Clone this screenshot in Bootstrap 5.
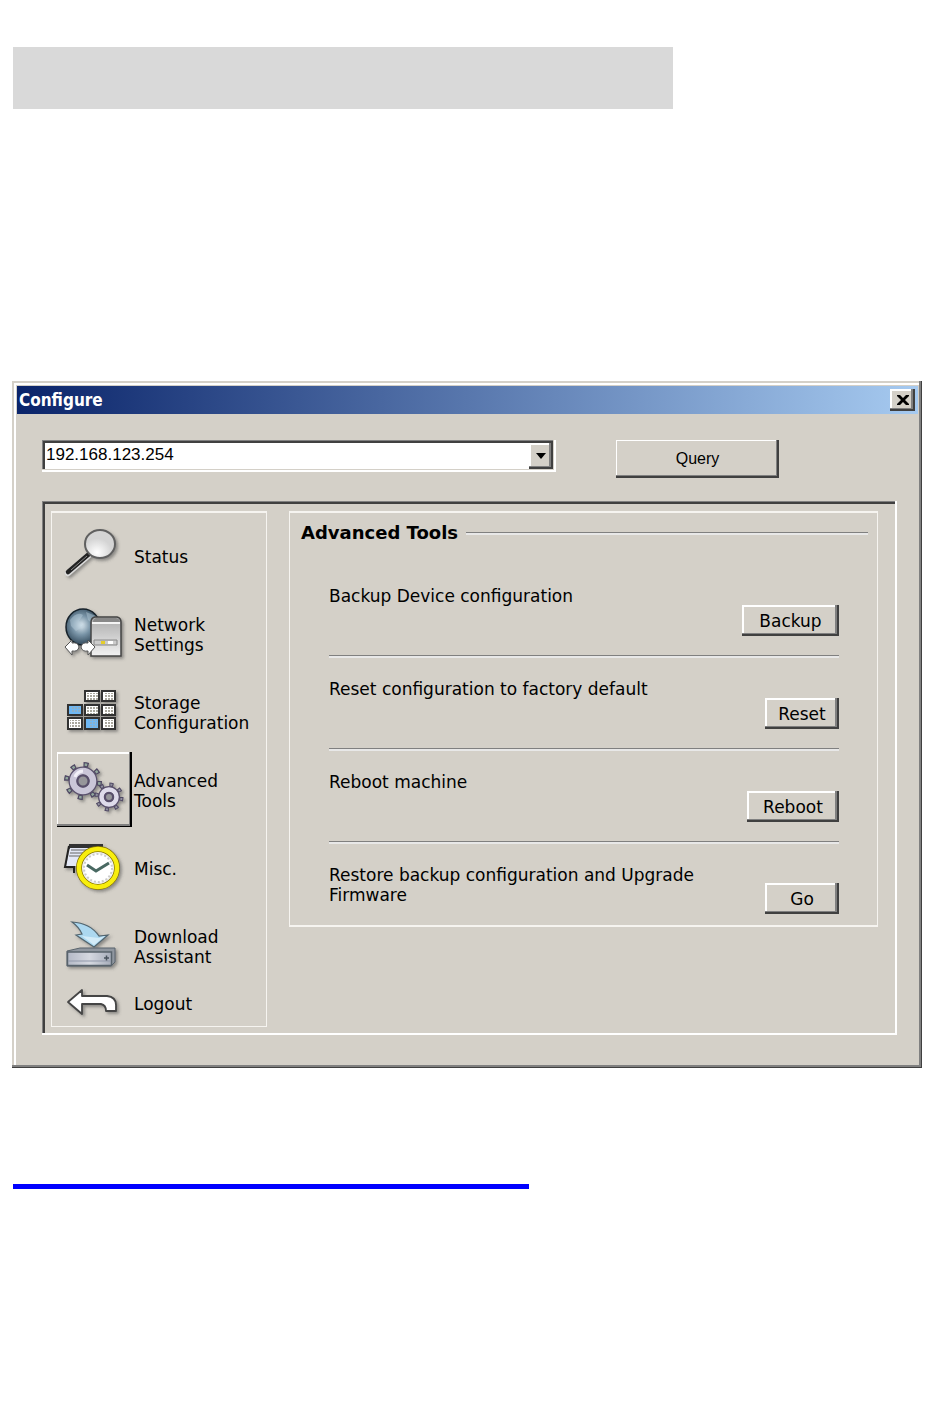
<!DOCTYPE html>
<html lang="en">
<head>
<meta charset="utf-8">
<meta name="viewport" content="width=device-width, initial-scale=1">
<title>Configure</title>
<link rel="stylesheet" href="https://cdn.jsdelivr.net/npm/bootstrap@5.3.0/dist/css/bootstrap.min.css">
<style>
  :root { --face: #d4d0c8; --shade: #808080; --edge: #404040; }
  body { font: 17px/20px "DejaVu Sans", sans-serif; color: #000; background: #fff; }
  .sheet { padding: 47px 28px 47px 12px; }
  .banner-block { width: 72.5%; height: 62px; margin-left: 1px; background: #d9d9d9; }
  .blue-rule { width: 56.7%; height: 5px; margin: 116px 0 0 1px; background: #00f; border: 0; opacity: 1; }
  .dialog-win {
    margin-top: 272px; padding: 5px 4px 3px 5px; background: var(--face);
    box-shadow: inset -1px -1px var(--edge), inset -3px -3px var(--shade), inset 2px 2px var(--face), inset 4px 4px #fff;
  }
  .title-strip {
    height: 28px; padding: 0 3px 0 2px; color: #fff;
    background: linear-gradient(90deg, #0a246a, #a6caf0);
    font: bold 17px/28px "DejaVu Sans Condensed", "DejaVu Sans", sans-serif;
  }
  .title-strip h1 { font: inherit; margin: 0; }
  .raised {
    background: var(--face); color: #000; border: 0; border-radius: 0; padding: 0;
    box-shadow: inset -2px -2px var(--edge), inset -4px -3px var(--shade), inset 2px 2px #fff;
  }
  .close-btn { width: 25px; height: 22px; }
  .dialog-body { padding: 26px 21px 30px 25px; }
  .query-row { column-gap: 60px; }
  .well-cols { column-gap: 22px; }
  .arial { font-family: "Liberation Sans", sans-serif; }
  .combo { flex: 0 1 514px; height: 32px; padding: 3px; background: #fff;
    box-shadow: inset -2px -2px #fff, inset -3px -3px var(--face), inset 1px 1px var(--shade), inset 3px 3px var(--edge); }
  .combo select { appearance: none; border: 0; border-radius: 0; background: transparent; width: 100%; height: 23px; padding: 0 26px 0 1px; color: #000; line-height: 22px; }
  .combo-arrow { right: 3px; top: 3px; width: 24px; height: 26px; pointer-events: none; }
  .query-btn { flex: 0 0 163px; height: 38px; font-size: 16px;
    box-shadow: inset -2px -2px var(--edge), inset -3px -3px var(--shade), inset 1px 1px #fff; }
  .well { margin-top: 23px; padding: 10px 19px 8px 9px;
    box-shadow: inset -2px -2px #fff, inset 1px 1px var(--shade), inset 3px 3px var(--edge); }
  .etched { border: 1px solid #f6f4f0; border-top-width: 2px; }
  .side-menu { flex: 0 0 216px; padding: 5px 5px 4px; }
  .side-menu a { color: #000; text-decoration: none; height: 78px; column-gap: 2px; }
  .side-menu a.short { height: 36px; }
  .side-menu svg { flex: none; width: 75px; height: 100%; }
  .side-menu .active svg { height: 75px; margin-bottom: 3px; background: var(--face);
    box-shadow: inset -2px -1px #000, inset -3px -3px var(--shade), inset 1px 2px #fff; }
  .tools { padding: 10px 9px 11px 11px; border-bottom-width: 2px; }
  .tools h2 { font: bold 18px/20px "DejaVu Sans", sans-serif; margin: 0; }
  .groove { height: 3px; border-top: 1px solid var(--shade); background: #e8e8e8; }
  .task-list { padding: 22px 29px 0 28px; }
  .task { min-height: 93px; padding: 21px 0 20px; border-bottom: 2px solid #e8e8e8; box-shadow: inset 0 -1px var(--shade); }
  .task:last-child { min-height: 0; padding-bottom: 0; border: 0; box-shadow: none; }
  .task p { margin: 0; min-height: 49px; }
  .task button { flex: none; height: 31px; width: 74px; }
  .task .wide { width: 97px; }
  .task .mid { width: 92px; }
</style>
</head>
<body>
<div class="sheet">
  <div class="banner-block"></div>

  <main class="dialog-win">
    <header class="title-strip d-flex align-items-center justify-content-between">
      <h1>Configure</h1>
      <button type="button" class="raised close-btn d-flex align-items-center justify-content-center" aria-label="Close">
        <svg width="12" height="10" viewBox="0 0 12 10"><path d="M0 0h3l3 3 3-3h3v1L8 5l4 4v1H9L6 7l-3 3H0V9l4-4-4-4z"/></svg>
      </button>
    </header>

    <div class="dialog-body">
      <div class="query-row d-flex align-items-start">
        <div class="combo position-relative">
          <select class="arial d-block" aria-label="Device address"><option>192.168.123.254</option></select>
          <span class="combo-arrow raised position-absolute d-flex align-items-center justify-content-center">
            <svg width="10" height="6" viewBox="0 0 10 6"><path d="M0 0h10L5 6z"/></svg>
          </span>
        </div>
        <button type="button" class="raised query-btn arial">Query</button>
      </div>

      <div class="well well-cols d-flex align-items-start">
        <nav class="side-menu etched" aria-label="Settings sections">
          <a href="#status" class="d-flex align-items-center">
            <svg viewBox="0 0 75 78">
              <defs>
                <filter id="soft" x="-30%" y="-30%" width="160%" height="160%"><feDropShadow dx="2" dy="2" stdDeviation="1.500" flood-color="#444" flood-opacity=".5"/></filter>
                <radialGradient id="lens" cx=".4" cy=".8"><stop offset="0" stop-color="#fff"/><stop offset="1" stop-color="#d4d4d4"/></radialGradient>
                <radialGradient id="globe" cx=".45" cy=".45" r=".6"><stop offset="0" stop-color="#dbe8f0"/><stop offset=".45" stop-color="#7893a6"/><stop offset="1" stop-color="#253b4c"/></radialGradient>
                <linearGradient id="steel" x2="0" y2="1"><stop offset="0" stop-color="#aaa"/><stop offset="1" stop-color="#f2f2f2"/></linearGradient>
                <linearGradient id="drive" x2="1" y2="0"><stop offset="0" stop-color="#b4b9c6"/><stop offset=".5" stop-color="#d5d8e0"/><stop offset="1" stop-color="#a6acb9"/></linearGradient>
                <pattern id="dots" width="3" height="3" patternUnits="userSpaceOnUse"><path d="M0 0h2v2h-2z" fill="#aaa89e"/></pattern>
              </defs>
              <g filter="url(#soft)">
                <path d="M33 36 11 55" stroke="#ddd" stroke-width="6" stroke-linecap="round"/>
                <path d="M32 36 11 54" stroke="#222" stroke-width="4.500" stroke-linecap="round"/>
                <path d="M30 38 14 52" stroke="#888" stroke-width="1"/>
                <ellipse cx="43" cy="26" rx="15" ry="14" fill="url(#lens)" stroke="#606060" stroke-width="2"/>
              </g>
            </svg>
            <span>Status</span></a>
          <a href="#network" class="d-flex align-items-center">
            <svg viewBox="0 0 75 78"><g filter="url(#soft)">
              <ellipse cx="26" cy="31" rx="17" ry="18" fill="url(#globe)" stroke="#17222b" stroke-width="1.500"/>
              <path d="M13 24q7-9 13-5l-4 6 5 5-8 5-5-5zM29 16l10 4-2 9-6-5z" fill="#b9cfdc" opacity=".45"/>
              <path d="M34 26q0-4 4-5h22q4 1 4 5v34H34z" fill="url(#steel)" stroke="#444" stroke-width="1.500"/>
              <path d="M36 26q0-3 3-4h20q4 1 4 4z" fill="#888"/>
              <path d="M35 27h28" stroke="#f4f4f4" stroke-width="2"/>
              <path d="M37 44h23v5H37z" fill="#ccc" stroke="#888" stroke-width="1"/>
              <path d="M44 45h4v3h-4z" fill="#e5ce2c"/><path d="M51 45h5v3h-5z" fill="#fff"/>
              <path d="M8 51l7-7v3q6-1 7 4-1 5-7 4v4zM38 51l-7-7v3q-6-1-7 4 1 5 7 4v4z" fill="#fff" stroke="#555" stroke-width="1"/>
            </g></svg>
            <span>Network<br>Settings</span></a>
          <a href="#storage" class="d-flex align-items-center">
            <svg viewBox="0 0 75 78"><g filter="url(#soft)">
              <g fill="#fff" stroke="#333" stroke-width="2">
                <path d="M28 17h14v10H28zM45 17h13v10H45zM28 31h14v10H28zM45 31h13v10H45zM11 44h14v11H11zM45 44h13v11H45z"/>
                <path d="M11 31h14v10H11zM28 44h14v11H28z" fill="#70b8f4"/>
              </g></g>
              <path d="M30 19h11v7H30zM47 19h10v7H47zM30 33h11v7H30zM47 33h10v7H47zM13 46h11v8H13zM47 46h10v8H47z" fill="url(#dots)"/>
              <path d="M15 33h8v6h-8zM32 46h8v7h-8z" fill="url(#dots)" opacity=".5"/>
            </svg>
            <span>Storage<br>Configuration</span></a>
          <a href="#tools" class="active d-flex align-items-center" aria-current="page">
            <svg viewBox="0 0 75 75"><g filter="url(#soft)" fill="none">
              <circle cx="26" cy="29" r="16.500" stroke="#4f4863" stroke-width="5" stroke-dasharray="5 7.960"/>
              <circle cx="26" cy="29" r="16.500" stroke="#91a79c" stroke-width="2.500" stroke-dasharray="2.500 10.460" stroke-dashoffset="-1.250"/>
              <circle cx="26" cy="29" r="10" stroke="#59506b" stroke-width="9"/>
              <circle cx="26" cy="29" r="10" stroke="#cac6d8" stroke-width="6.500"/>
              <path d="M18 25a9 9 0 0 1 8-6" stroke="#f2f0f8" stroke-width="3"/>
              <circle cx="26" cy="29" r="5.500" fill="#96969a" stroke="#59506b" stroke-width="2"/>
              <circle cx="52" cy="45" r="12.500" stroke="#4f4863" stroke-width="4" stroke-dasharray="4 5.820"/>
              <circle cx="52" cy="45" r="12.500" stroke="#91909f" stroke-width="2" stroke-dasharray="2 7.820" stroke-dashoffset="-1"/>
              <circle cx="52" cy="45" r="7.500" stroke="#59506b" stroke-width="7"/>
              <circle cx="52" cy="45" r="7.500" stroke="#dedbea" stroke-width="4.500"/>
              <circle cx="52" cy="45" r="4" fill="#96969a" stroke="#59506b" stroke-width="2"/>
            </g></svg>
            <span>Advanced<br>Tools</span></a>
          <a href="#misc" class="d-flex align-items-center">
            <svg viewBox="0 0 75 78"><g filter="url(#soft)">
              <path d="M12 14h34v5H12z" fill="#333"/>
              <path d="M13 18h22v18H9z" fill="#e3e8f6"/>
              <path d="M14 20h17M13 23h14M12 26h12" stroke="#666" stroke-width="1"/>
              <path d="M12 16 8 37h9v6" fill="none" stroke="#222" stroke-width="2"/>
              <circle cx="41" cy="38" r="19" fill="#f3f3f3" stroke="#857400" stroke-width="6"/>
              <circle cx="41" cy="38" r="19" fill="none" stroke="#f8ee10" stroke-width="4.500"/>
              <circle cx="41" cy="38" r="14" fill="#fff" stroke="#ccc" stroke-width="2" stroke-dasharray="2 2"/>
              <path d="M30 35l9 6 13-8" fill="none" stroke="#486962" stroke-width="3"/>
            </g></svg>
            <span>Misc.</span></a>
          <a href="#download" class="d-flex align-items-center">
            <svg viewBox="0 0 75 78"><g filter="url(#soft)">
              <path d="M10 43l13-3h35v14l-4 4H10z" fill="#8f969f" stroke="#59636c" stroke-width="1"/>
              <path d="M10.500 44h44v13.500h-44z" fill="url(#drive)" stroke="#59636c" stroke-width="1.500"/>
              <path d="M11 53h43" stroke="#9299ab" stroke-width="1"/>
              <path d="M47 50h5M49.500 47.500v5" stroke="#49535c" stroke-width="1.500"/>
              <path d="M15 14q18 1 27 14l9-1-14 12-18-12 6-1q-3-7-10-12z" fill="#acd8f0" stroke="#52656f" stroke-width="1.200"/>
              <path d="M25 28l17 2 6-2-11 9z" fill="#d3ecf9"/>
            </g></svg>
            <span>Download<br>Assistant</span></a>
          <a href="#logout" class="short d-flex align-items-center">
            <svg viewBox="0 0 75 36"><g filter="url(#soft)">
              <path d="M11 16 25 4v6h25q9 1 9 9v6H49q0-6-5-7H25v10z" fill="#fff" stroke="#444" stroke-width="1.800" stroke-linejoin="round"/>
            </g></svg>
            <span>Logout</span></a>
        </nav>

        <section class="tools etched flex-grow-1">
          <div class="d-flex align-items-center gap-2">
            <h2>Advanced Tools</h2>
            <div class="groove flex-grow-1"></div>
          </div>
          <div class="task-list">
            <div class="task d-flex justify-content-between">
              <p>Backup Device configuration</p>
              <button type="button" class="raised wide align-self-end">Backup</button>
            </div>
            <div class="task d-flex justify-content-between">
              <p>Reset configuration to factory default</p>
              <button type="button" class="raised align-self-end">Reset</button>
            </div>
            <div class="task d-flex justify-content-between">
              <p>Reboot machine</p>
              <button type="button" class="raised mid align-self-end">Reboot</button>
            </div>
            <div class="task d-flex justify-content-between">
              <p>Restore backup configuration and Upgrade Firmware</p>
              <button type="button" class="raised align-self-end">Go</button>
            </div>
          </div>
        </section>
      </div>
    </div>
  </main>

  <hr class="blue-rule">
</div>
<script src="https://cdn.jsdelivr.net/npm/bootstrap@5.3.0/dist/js/bootstrap.bundle.min.js"></script>
</body>
</html>
